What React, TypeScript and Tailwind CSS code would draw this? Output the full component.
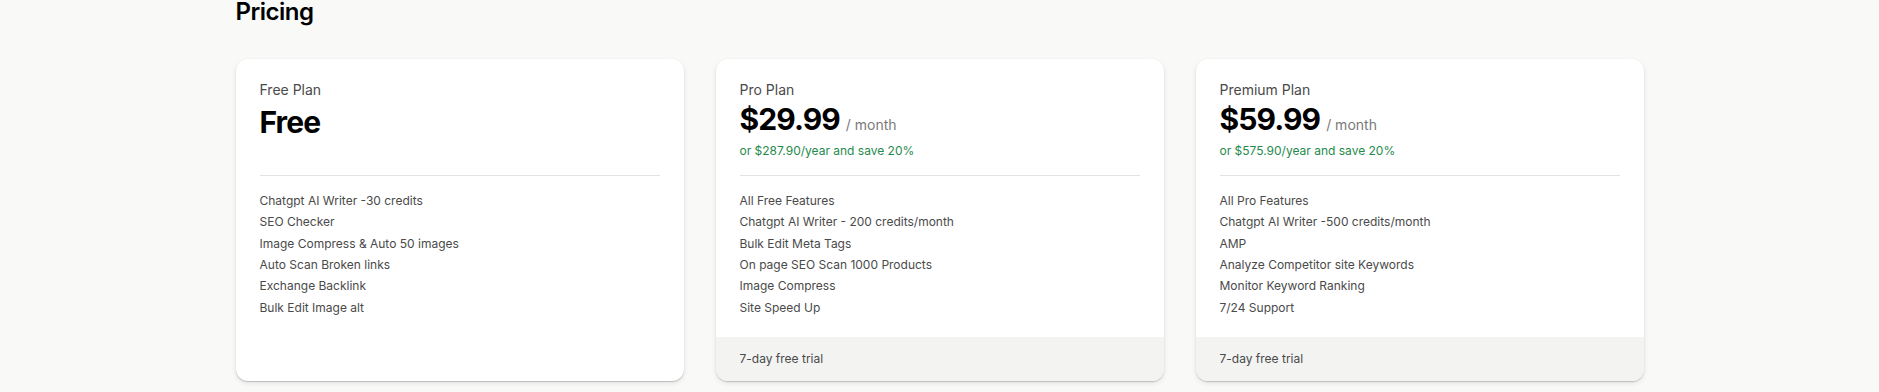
import React from 'react';

type Plan = {
    name: string;
    price: string;
    period?: string;
    yearly?: string;
    features: string[];
    trial?: string;
};

const plans: Plan[] = [
    {
        name: 'Free Plan',
        price: 'Free',
        features: [
            'Chatgpt AI Writer -30 credits',
            'SEO Checker',
            'Image Compress & Auto 50 images',
            'Auto Scan Broken links',
            'Exchange Backlink',
            'Bulk Edit Image alt',
        ],
    },
    {
        name: 'Pro Plan',
        price: '$29.99',
        period: '/ month',
        yearly: 'or $287.90/year and save 20%',
        features: [
            'All Free Features',
            'Chatgpt AI Writer - 200 credits/month',
            'Bulk Edit Meta Tags',
            'On page SEO Scan 1000 Products',
            'Image Compress',
            'Site Speed Up',
        ],
        trial: '7-day free trial',
    },
    {
        name: 'Premium Plan',
        price: '$59.99',
        period: '/ month',
        yearly: 'or $575.90/year and save 20%',
        features: [
            'All Pro Features',
            'Chatgpt AI Writer -500 credits/month',
            'AMP',
            'Analyze Competitor site Keywords',
            'Monitor Keyword Ranking',
            '7/24 Support',
        ],
        trial: '7-day free trial',
    },
];

function PlanCard({ plan }: { plan: Plan }) {
    return (
        <div className="flex flex-col bg-white rounded-xl overflow-hidden shadow-[0_1px_1px_rgba(0,0,0,0.18),0_2px_5px_rgba(0,0,0,0.1)]">
            <div className="flex-1 px-6 pt-[21px] pb-[19px]">
                {/* Header */}
                <div className="h-[80px]">
                    <p className="text-sm leading-5 text-[#4a4a4a]">{plan.name}</p>
                    {plan.period ? (
                        <>
                            <div className="mt-px flex items-baseline gap-[6px]">
                                <span className="text-[30px] leading-9 font-bold tracking-[-0.9px] text-black">{plan.price}</span>
                                <span className="text-sm text-[#7a7a7a]">{plan.period}</span>
                            </div>
                            <p className="mt-[4px] text-xs leading-5 text-[#1f8a4c]">{plan.yearly}</p>
                        </>
                    ) : (
                        <div className="mt-[4px] text-[30px] leading-9 font-bold tracking-[-0.9px] text-black">{plan.price}</div>
                    )}
                </div>

                <div className="mt-[15px] border-t border-[#e3e3e3]" />

                {/* Features */}
                <ul className="mt-[14px]">
                    {plan.features.map((f) => (
                        <li key={f} className="text-xs leading-[21.33px] text-[#4a4a4a]">{f}</li>
                    ))}
                </ul>
            </div>

            {plan.trial && (
                <div className="bg-[#f3f3f2] px-6 py-3 text-xs leading-5 text-[#4a4a4a]">
                    {plan.trial}
                </div>
            )}
        </div>
    );
}

export default function App() {
    return (
        <div className="min-h-[392px] bg-[#f9f9f8] font-['Inter',sans-serif]">
            <div className="mx-auto w-[1408px]">
                <h2 className="text-2xl leading-6 font-semibold tracking-[-0.5px] text-black">Pricing</h2>
                <div className="mt-[35px] grid grid-cols-3 gap-8">
                    {plans.map((p) => (
                        <PlanCard key={p.name} plan={p} />
                    ))}
                </div>
            </div>
        </div>
    );
}
